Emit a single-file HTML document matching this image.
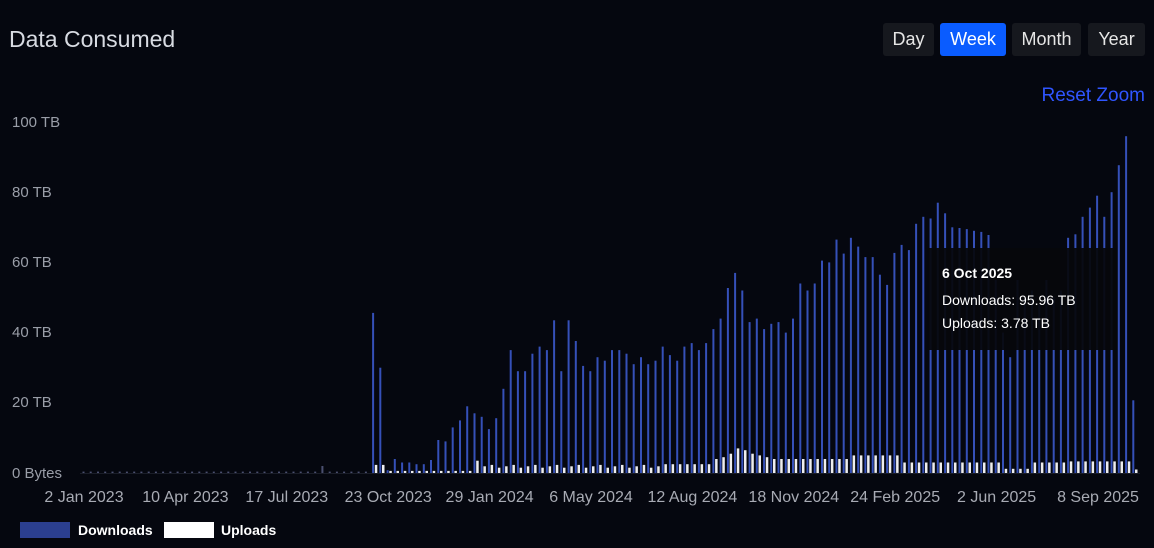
<!DOCTYPE html>
<html><head><meta charset="utf-8"><style>
body{margin:0;width:1154px;height:548px;background:#05070f;overflow:hidden;font-family:"Liberation Sans",sans-serif;position:relative}
.t{position:absolute;left:9px;top:26px;color:#d8dbe2;font-size:23px}
.btn{position:absolute;top:23px;height:33px;line-height:33px;text-align:center;color:#e6e6e6;font-size:18px;background:#16181e;border-radius:3px}
.rz{position:absolute;right:9px;top:85px;color:#2f55ff;font-size:19px}
svg{position:absolute;left:0;top:0}
</style></head><body>
<div class="t">Data Consumed</div>
<div class="btn" style="left:883px;width:51px">Day</div>
<div class="btn" style="left:940px;width:66px;background:#0a5cff;color:#fff">Week</div>
<div class="btn" style="left:1012px;width:69px">Month</div>
<div class="btn" style="left:1088px;width:57px">Year</div>
<div class="rz">Reset Zoom</div>
<svg id="s" width="1154" height="548" font-family="Liberation Sans, sans-serif"></svg>
<script>
var d=[];for(var i=0;i<40;i++)d.push(i==33?2:0.4);
d=d.concat([45.6,30,0.8,4,3,3,2.5,2.5,3.7,9.4,9,13,15,19,17,16,12.5,15.6,24,35,29,29,34,36,35,43.5,29,43.5,37.6,30.5,29,33,32,35,35,34,31,33,31,32,36,33.6,32,36,37,35,37,41,44,52.7,57,52,43,44,41,42.5,43,40,44,54,52,54,60.5,60,66.5,62.5,67,64.5,61.5,61.5,56.5,53.6,62.7,65,63.5,71,73,72.5,77,74,70,69.8,69.5,69,68.7,67.8,55,40,33,55,50,52,48,55,50,52,67,68,73,75.6,79,73,80,87.7,95.96,20.7]);
var u=[];for(i=0;i<d.length;i++){var v;if(i<40)v=0;else if(i<42)v=2.3;else if(i<54)v=0.6;else if(i==54)v=3.5;else if(i<80)v=1.5+((i*7)%3)*0.4;else if(i<87)v=2.5;else if(i<95)v=[4,4.5,5.5,7,6.5,5.5,5,4.5][i-87];else if(i<106)v=4;else if(i<113)v=5;else if(i<136)v=3;else v=3.3;if(i>=127&&i<131)v=1.2;if(i==d.length-1)v=1;u.push(v)}
var s='',base=473,k=3.51;
s+='<line x1="80" y1="473.5" x2="1140" y2="473.5" stroke="#1a1d28"/>';
for(i=0;i<d.length;i++){var x=84+i*7.24;var h=Math.max(d[i]*k,1);
s+='<rect x="'+(x-1.5).toFixed(1)+'" y="'+(base-h).toFixed(1)+'" width="2" height="'+h.toFixed(1)+'" fill="'+(i<40?'#4b5070':'#3550b8')+'"/>';
if(u[i]>0){var hu=u[i]*k;s+='<rect x="'+(x+1.2).toFixed(1)+'" y="'+(base-hu).toFixed(1)+'" width="2.5" height="'+hu.toFixed(1)+'" fill="#eeeeee"/>';}}
var yl=[['100 TB',122],['80 TB',192],['60 TB',262],['40 TB',332],['20 TB',402],['0 Bytes',473]];
yl.forEach(function(a){s+='<text x="12" y="'+(a[1]+5)+'" fill="#9a9ea8" font-size="15">'+a[0]+'</text>'});
var xl=['2 Jan 2023','10 Apr 2023','17 Jul 2023','23 Oct 2023','29 Jan 2024','6 May 2024','12 Aug 2024','18 Nov 2024','24 Feb 2025','2 Jun 2025','8 Sep 2025'];
xl.forEach(function(t,j){s+='<text x="'+(84+j*101.4)+'" y="502" fill="#a8abb4" font-size="16" text-anchor="middle">'+t+'</text>'});
s+='<rect x="927" y="248" width="190" height="102" fill="#06070b" fill-opacity="0.93"/>';
s+='<text x="942" y="278" fill="#fff" font-size="14" font-weight="bold">6 Oct 2025</text>';
s+='<text x="942" y="305" fill="#fff" font-size="14">Downloads: 95.96 TB</text>';
s+='<text x="942" y="328" fill="#fff" font-size="14">Uploads: 3.78 TB</text>';
s+='<rect x="20" y="522" width="50" height="16" fill="#2b3f8f"/><text x="78" y="535" fill="#fff" font-size="14" font-weight="bold">Downloads</text>';
s+='<rect x="164" y="522" width="50" height="16" fill="#fff"/><text x="221" y="535" fill="#fff" font-size="14" font-weight="bold">Uploads</text>';
document.getElementById('s').innerHTML=s;
</script>
</body></html>
